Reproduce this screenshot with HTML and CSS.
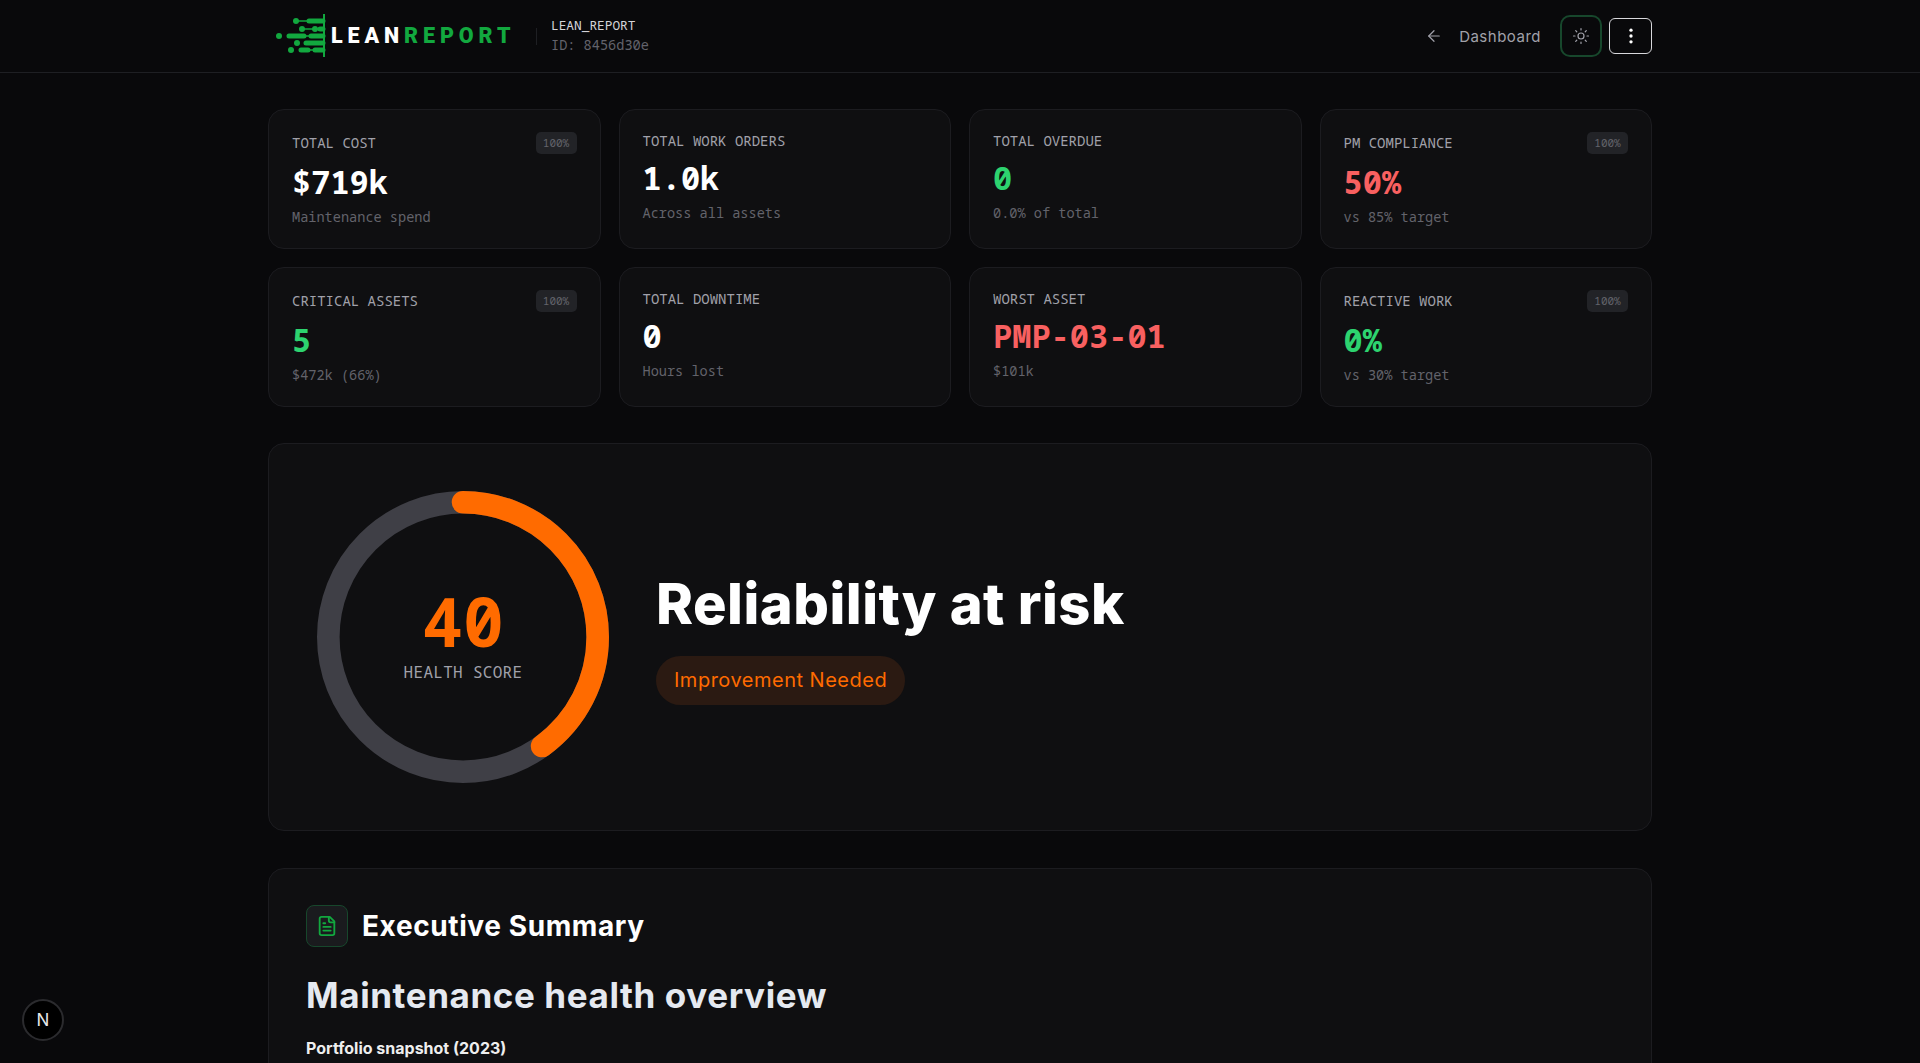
FILE: index.html
```html
<!DOCTYPE html>
<html lang="en">
<head>
    <meta charset="UTF-8">
    <meta name="viewport" content="width=device-width, initial-scale=1.0">
    <title>Lean Report</title>
    <link rel="stylesheet" href="styles.css">
</head>
<body>
    <header class="top-bar">
        <div class="top-inner">
            <div class="brand">
                <svg class="brand-mark" width="50" height="44" viewBox="0 0 50 44" fill="none" stroke="#12a83f">
                    <rect x="47" y="0" width="2" height="43" fill="#12a83f" stroke="none"/>
                    <g fill="#12a83f" stroke="none">
                        <circle cx="20" cy="7" r="3"/>
                        <circle cx="26" cy="15" r="3"/>
                        <circle cx="3" cy="22" r="3"/>
                        <circle cx="21" cy="29" r="3"/>
                        <circle cx="15" cy="36" r="3"/>
                        <circle cx="39" cy="15" r="3"/>
                    </g>
                    <g stroke-width="5" stroke-linecap="round">
                        <path d="M33 7H47M13 22H28M35 22H47M30 29H47M25 36H32M39 36H47M44 15H47"/>
                    </g>
                    <g stroke-width="1.5">
                        <path d="M20 7H33M26 15H44M28 22H35M32 36H39"/>
                    </g>
                </svg>
                <div class="brand-name"><span class="lean">LEAN</span><span class="report">REPORT</span></div>
            </div>
            <div class="report-id">
                <span class="report-title">LEAN_REPORT</span>
                <span class="report-code">ID: 8456d30e</span>
            </div>
            <nav class="top-actions">
                <a class="back-link" href="#">
                    <svg width="18" height="18" viewBox="0 0 24 24" fill="none" stroke="currentColor" stroke-width="1.6" stroke-linecap="round" stroke-linejoin="round"><path d="m12 19-7-7 7-7"/><path d="M19 12H5"/></svg>
                    <span>Dashboard</span>
                </a>
                <button class="theme-btn" type="button">
                    <svg width="18" height="18" viewBox="0 0 24 24" fill="none" stroke="currentColor" stroke-width="1.6" stroke-linecap="round" stroke-linejoin="round"><circle cx="12" cy="12" r="4"/><path d="M12 2v2M12 20v2M4.93 4.93l1.41 1.41M17.66 17.66l1.41 1.41M2 12h2M20 12h2M6.34 17.66l-1.41 1.41M19.07 4.93l-1.41 1.41"/></svg>
                </button>
                <button class="menu-btn" type="button">
                    <svg width="20" height="20" viewBox="0 0 24 24" fill="#fff"><circle cx="12" cy="5" r="2"/><circle cx="12" cy="12" r="2"/><circle cx="12" cy="19" r="2"/></svg>
                </button>
            </nav>
        </div>
    </header>

    <main class="page">
        <section class="stat-grid">
            <div class="stat-card">
                <div class="stat-head"><span class="stat-label">TOTAL COST</span><span class="stat-badge">100%</span></div>
                <div class="stat-value">$719k</div>
                <div class="stat-sub">Maintenance spend</div>
            </div>
            <div class="stat-card">
                <div class="stat-head"><span class="stat-label">TOTAL WORK ORDERS</span></div>
                <div class="stat-value">1.0k</div>
                <div class="stat-sub">Across all assets</div>
            </div>
            <div class="stat-card">
                <div class="stat-head"><span class="stat-label">TOTAL OVERDUE</span></div>
                <div class="stat-value good">0</div>
                <div class="stat-sub">0.0% of total</div>
            </div>
            <div class="stat-card">
                <div class="stat-head"><span class="stat-label">PM COMPLIANCE</span><span class="stat-badge">100%</span></div>
                <div class="stat-value bad">50%</div>
                <div class="stat-sub">vs 85% target</div>
            </div>
            <div class="stat-card">
                <div class="stat-head"><span class="stat-label">CRITICAL ASSETS</span><span class="stat-badge">100%</span></div>
                <div class="stat-value good">5</div>
                <div class="stat-sub">$472k (66%)</div>
            </div>
            <div class="stat-card">
                <div class="stat-head"><span class="stat-label">TOTAL DOWNTIME</span></div>
                <div class="stat-value">0</div>
                <div class="stat-sub">Hours lost</div>
            </div>
            <div class="stat-card">
                <div class="stat-head"><span class="stat-label">WORST ASSET</span></div>
                <div class="stat-value bad">PMP-03-01</div>
                <div class="stat-sub">$101k</div>
            </div>
            <div class="stat-card">
                <div class="stat-head"><span class="stat-label">REACTIVE WORK</span><span class="stat-badge">100%</span></div>
                <div class="stat-value good">0%</div>
                <div class="stat-sub">vs 30% target</div>
            </div>
        </section>

        <section class="hero-card">
            <svg class="gauge" width="292" height="292" viewBox="0 0 292 292" fill="none">
                <circle cx="146" cy="146" r="134.7" stroke="#3f3f46" stroke-width="22.6"/>
                <circle cx="146" cy="146" r="134.7" stroke="#ff6b00" stroke-width="22.6" stroke-linecap="round" stroke-dasharray="338.5 846.3" transform="rotate(-90 146 146)"/>
                <text class="gauge-score" x="146" y="156" text-anchor="middle">40</text>
                <text class="gauge-label" x="146" y="187" text-anchor="middle">HEALTH SCORE</text>
            </svg>
            <div class="hero-text">
                <h1 class="hero-title">Reliability at risk</h1>
                <span class="hero-pill">Improvement Needed</span>
            </div>
        </section>

        <section class="summary-card">
            <div class="summary-head">
                <span class="summary-icon">
                    <svg width="22" height="22" viewBox="0 0 24 24" fill="none" stroke="currentColor" stroke-width="2" stroke-linecap="round" stroke-linejoin="round"><path d="M15 2H6a2 2 0 0 0-2 2v16a2 2 0 0 0 2 2h12a2 2 0 0 0 2-2V7Z"/><path d="M14 2v4a2 2 0 0 0 2 2h4"/><path d="M10 9H8"/><path d="M16 13H8"/><path d="M16 17H8"/></svg>
                </span>
                <h2 class="summary-title">Executive Summary</h2>
            </div>
            <h3 class="summary-heading">Maintenance health overview</h3>
            <p class="summary-lead">Portfolio snapshot (2023)</p>
        </section>
    </main>

    <div class="dev-badge">N</div>
</body>
</html>
```

FILE: styles.css
```css
* {
    box-sizing: border-box;
}

html, body {
    height: 100%;
    overflow: hidden;
}

body {
    margin: 0;
    background-color: #09090b;
    color: #fff;
    font-family: "Inter", "Noto Sans", sans-serif;
}

/* header */
.top-bar {
    height: 73px;
    border-bottom: 1px solid #1e1f23;
}

.top-inner {
    width: 1384px;
    height: 72px;
    margin: 0 auto;
    display: flex;
    align-items: center;
}

.brand {
    display: flex;
    align-items: center;
    margin-left: 8px;
    width: 260px;
    height: 36px;
}

.brand-mark {
    flex: none;
}

.brand-name {
    margin-left: 5px;
    font-family: "Roboto", sans-serif;
    font-size: 21.5px;
    font-weight: 900;
    letter-spacing: 4.9px;
    line-height: 1;
}

.lean {
    color: #fff;
}

.report {
    color: #12a83f;
}

.report-id {
    display: flex;
    flex-direction: column;
    font-family: "Noto Sans Mono", "DejaVu Sans Mono", monospace;
    padding-left: 14px;
    padding-bottom: 2px;
    border-left: 1px solid #1e1f23;
    height: 17px;
    justify-content: center;
}

.report-title {
    font-size: 12.8px;
    line-height: 19px;
    color: #d4d4d8;
}

.report-code {
    font-size: 13.6px;
    line-height: 20px;
    color: #63636b;
}

.top-actions {
    margin-left: auto;
    display: flex;
    align-items: center;
}

.back-link {
    display: flex;
    align-items: center;
    gap: 16px;
    color: #a1a1aa;
    text-decoration: none;
    font-size: 15px;
    font-weight: 400;
    letter-spacing: .5px;
    margin-right: 19px;
}

.theme-btn {
    width: 42px;
    height: 42px;
    background: transparent;
    border: 2px solid #17472c;
    border-radius: 10px;
    color: #a1a1aa;
    display: flex;
    align-items: center;
    justify-content: center;
    padding: 0;
    margin-right: 7px;
}

.menu-btn {
    width: 43px;
    height: 36px;
    background: transparent;
    border: 1.5px solid #d8d8dc;
    border-radius: 6px;
    display: flex;
    align-items: center;
    justify-content: center;
    padding: 0;
}

/* page */
.page {
    width: 1384px;
    margin: 0 auto;
    padding-top: 36px;
}

.stat-grid {
    display: grid;
    grid-template-columns: repeat(4, 1fr);
    gap: 18px;
    margin-bottom: 36px;
}

.stat-card {
    height: 140px;
    padding: 22px 23px;
    background-color: #0f0f11;
    border: 1px solid #1c1c20;
    border-radius: 16px;
    font-family: "Noto Sans Mono", "DejaVu Sans Mono", monospace;
}

.stat-head {
    display: flex;
    align-items: center;
    justify-content: space-between;
    margin-bottom: 9px;
}

.stat-label {
    font-size: 14px;
    line-height: 18px;
    color: #a1a1aa;
}

.stat-badge {
    width: 41px;
    height: 21.6px;
    line-height: 21.6px;
    text-align: center;
    font-size: 11px;
    color: #63636b;
    background-color: #222327;
    border-radius: 5px;
}

.stat-value {
    font-size: 32px;
    font-weight: 700;
    line-height: 38.4px;
    color: #fff;
    margin-bottom: 7px;
}

.stat-value.good {
    color: #2dd36f;
}

.stat-value.bad {
    color: #f86060;
}

.stat-sub {
    font-size: 13.6px;
    line-height: 18px;
    color: #63636b;
}

/* hero */
.hero-card {
    height: 388px;
    padding: 48px;
    display: flex;
    align-items: center;
    gap: 47px;
    background-color: #0f0f11;
    border: 1px solid #1c1c20;
    border-radius: 16px;
    margin-bottom: 37px;
}

.gauge {
    flex: none;
}

.gauge-score {
    font-family: "Noto Sans Mono", "DejaVu Sans Mono", monospace;
    font-size: 68px;
    font-weight: 700;
    fill: #ff6b00;
}

.gauge-label {
    font-family: "Noto Sans Mono", "DejaVu Sans Mono", monospace;
    font-size: 16px;
    letter-spacing: .3px;
    fill: #a1a1aa;
}

.hero-title {
    margin: 0 0 18px;
    font-size: 56px;
    font-weight: 800;
    line-height: 68px;
    letter-spacing: .5px;
    color: #fff;
}

.hero-pill {
    display: inline-block;
    height: 49px;
    line-height: 49px;
    padding: 0 18px;
    font-size: 20px;
    letter-spacing: .5px;
    color: #ff6b00;
    background-color: #2b1a12;
    border-radius: 25px;
}

/* summary */
.summary-card {
    height: 400px;
    padding: 36px 37px;
    background-color: #0f0f11;
    border: 1px solid #1c1c20;
    border-radius: 16px;
}

.summary-head {
    display: flex;
    align-items: center;
    gap: 14px;
}

.summary-icon {
    width: 42px;
    height: 42px;
    display: flex;
    align-items: center;
    justify-content: center;
    color: #12a83f;
    background-color: #1a1b1e;
    border: 1px solid #17472c;
    border-radius: 8px;
}

.summary-title {
    margin: 0;
    font-size: 28px;
    font-weight: 700;
    letter-spacing: .6px;
    color: #fff;
}

.summary-heading {
    margin: 27px 0 0;
    font-size: 35px;
    font-weight: 700;
    line-height: 42px;
    letter-spacing: .6px;
    color: #e5e9f0;
}

.summary-lead {
    margin: 22px 0 0;
    font-size: 16px;
    font-weight: 700;
    color: #eeeeee;
}

.dev-badge {
    position: fixed;
    left: 22px;
    top: 999px;
    width: 42px;
    height: 42px;
    display: flex;
    align-items: center;
    justify-content: center;
    font-size: 17px;
    font-weight: 400;
    color: #e8e8e8;
    background-color: #000;
    border: 2px solid #2b2b2e;
    border-radius: 50%;
}
```
